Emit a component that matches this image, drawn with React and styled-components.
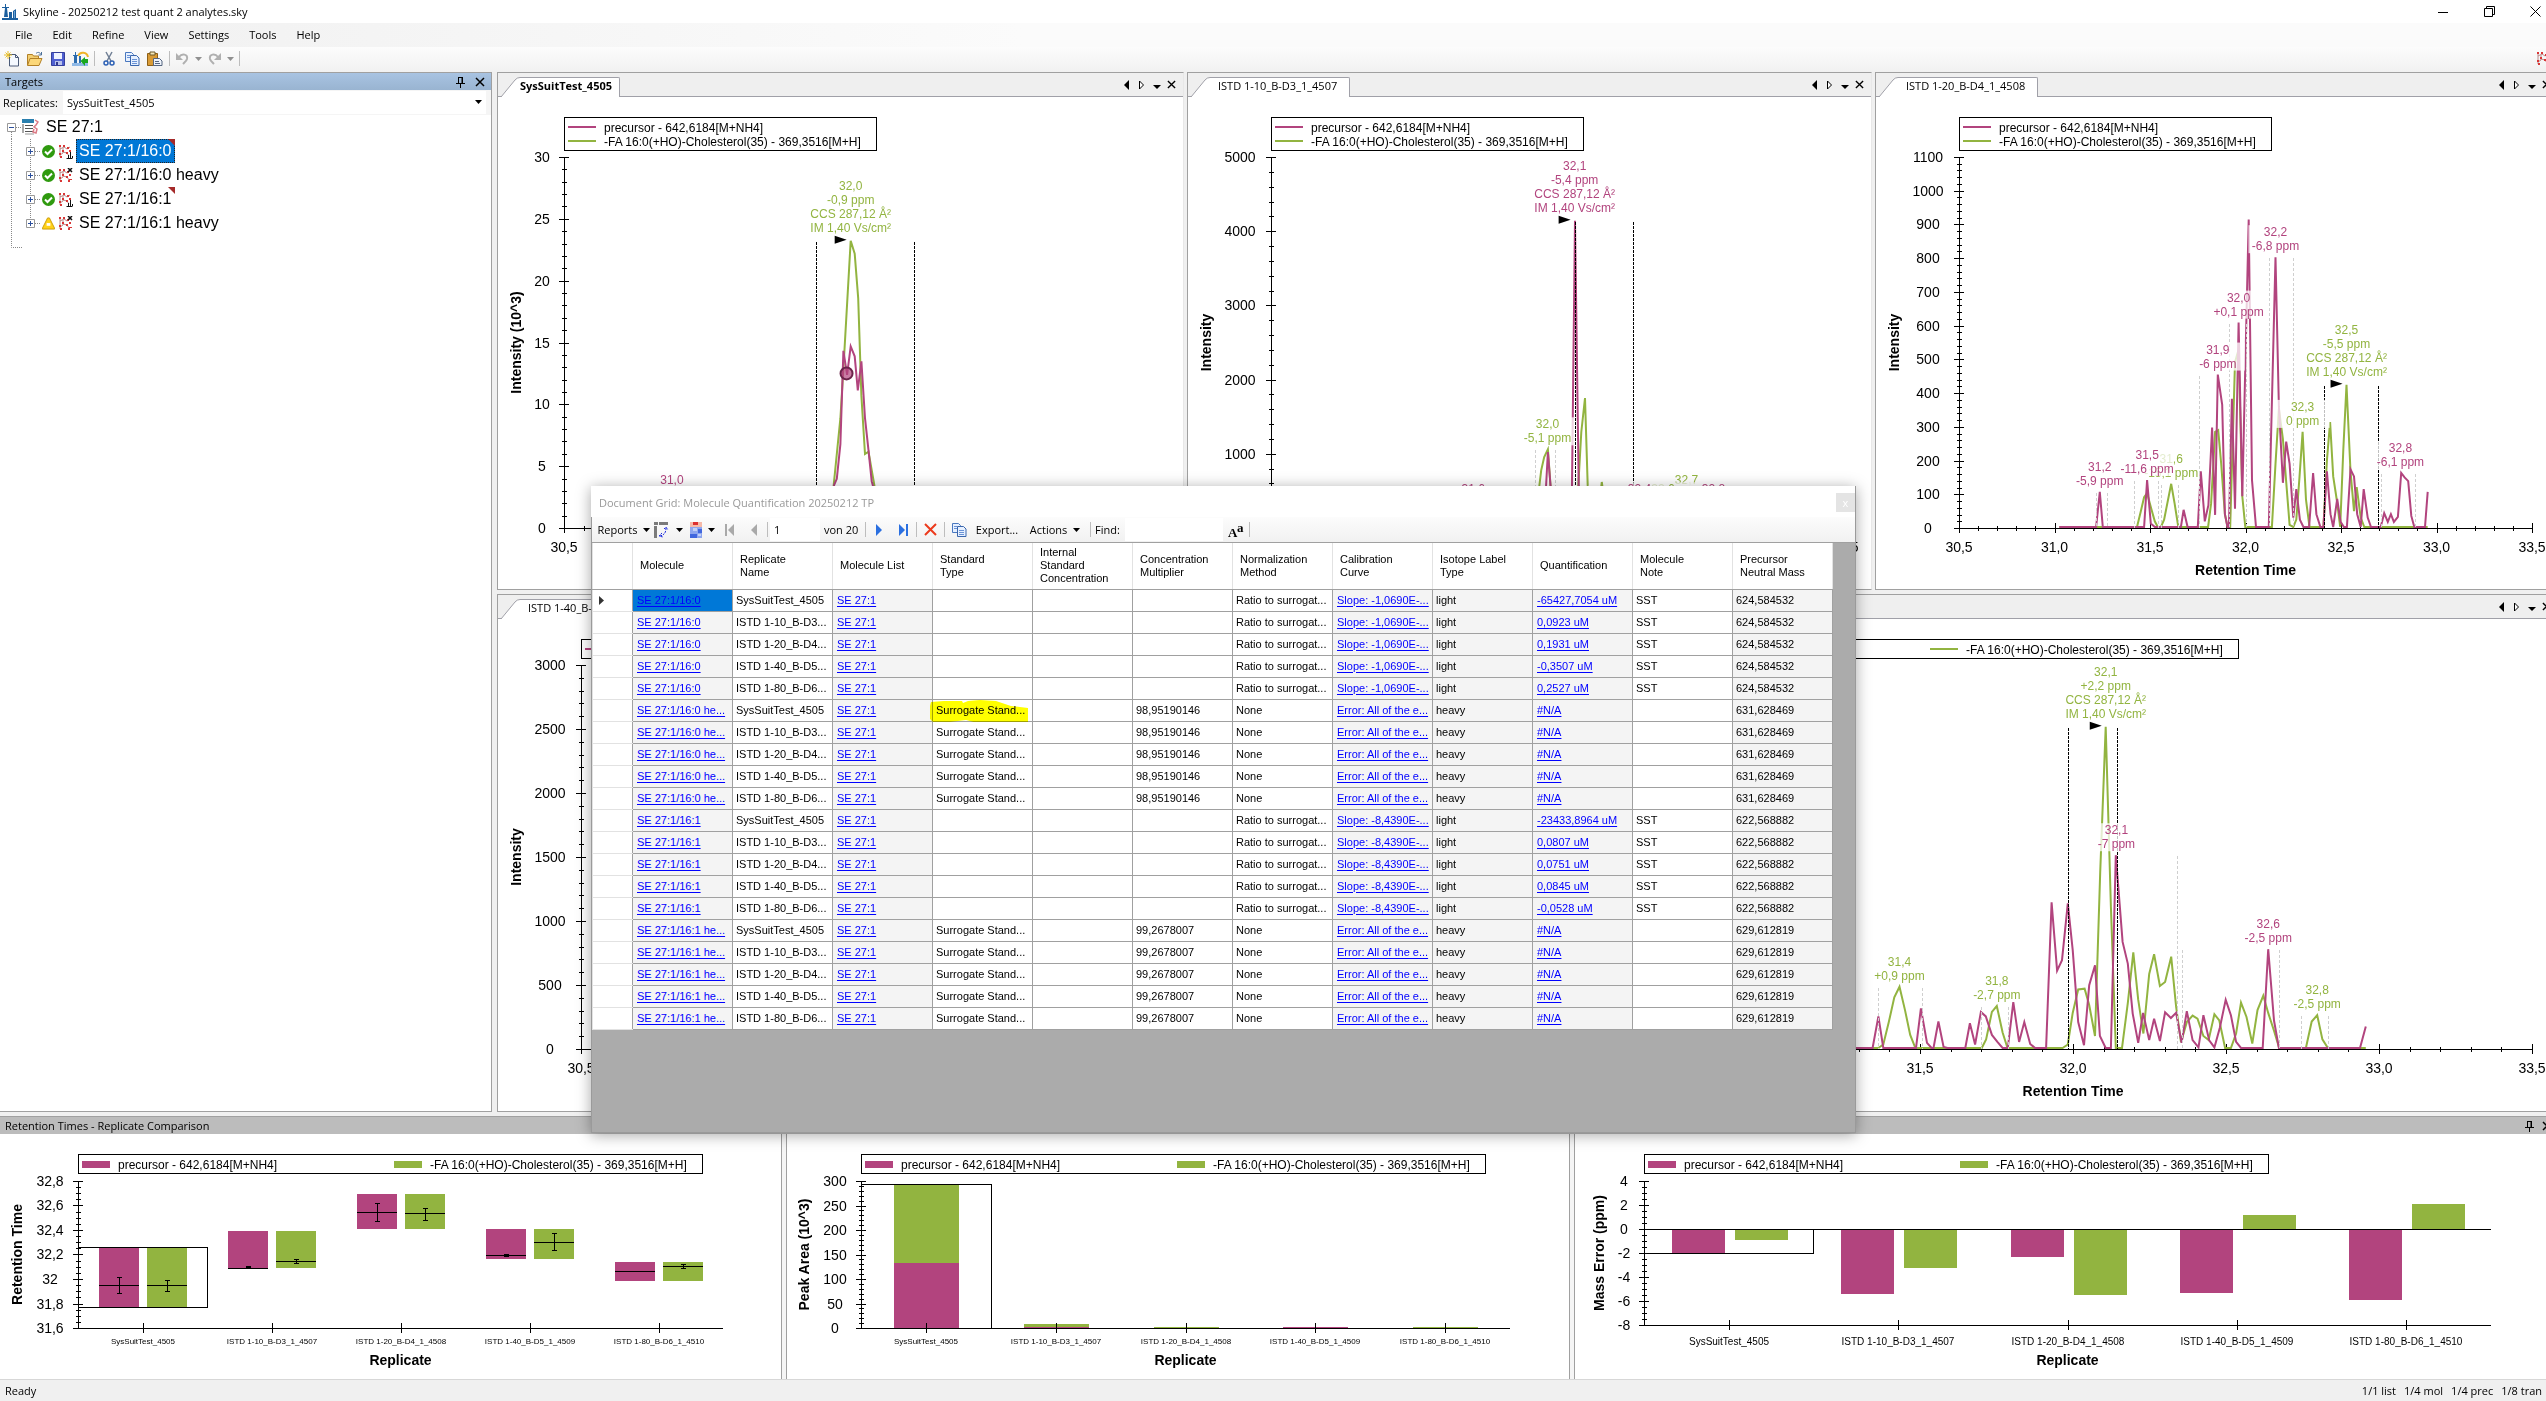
import React from "react";
import styled, { createGlobalStyle } from "styled-components";

const PURPLE = "#b2447e";
const GREEN = "#92b440";
const UI_FONT = `"Open Sans", "Noto Sans", sans-serif`;
const CHART_FONT = `"Liberation Sans", Arial, sans-serif`;

const GlobalStyle = createGlobalStyle`
*{box-sizing:border-box;}
html,body{
margin:0;
height:100%;
overflow:hidden;
background-color:#f0f0f0;
}
#root{height:100%;}
button,input,select{
font:inherit;
color:inherit;
}
svg{
display:block;
flex:none;
}
`

/* the main window is a little wider than the screen */
const Window=styled.div`
position:relative;
display:flex;
flex-direction:column;
width:calc(100% + 16px);
min-height:100%;
font-family:${UI_FONT};
font-size:11px;
line-height:16px;
color:#000;
background-color:#f0f0f0;
`
const TitleBar=styled.header`
display:flex;
align-items:center;
gap:5px;
height:23px;
padding-left:2px;
background-color:#fff;
`
const WindowTitle=styled.h1`
flex:1;
margin:0;
font-size:11px;
font-weight:400;
`
const PlainButton=styled.button`
display:flex;
align-items:center;
justify-content:center;
gap:6px;
padding:0;
border:0;
background:none;
`
const CaptionButton=styled(PlainButton)`
width:46px;
height:20px;
`
const CaptionButtons=styled.div`
display:flex;
padding-right:4px;
`
const MenuBar=styled.nav`
display:flex;
gap:20px;
height:24px;
padding-left:15px;
background:linear-gradient(to right,#f0f0f0,#fbfbfb 40%);
`
const ToolBar=styled.div`
display:flex;
align-items:center;
height:25px;
padding:0 7px 2px 0;
background:linear-gradient(#fcfcfc,#f1f1f1);
`
const ToolButton=styled(PlainButton)`
width:${(p) => p.$width || 23}px;
height:22px;
`
const Separator=styled.span`
width:1px;
height:15px;
margin:0 ${(p) => p.$gap || 2}px;
background-color:#bdbdbd;
`
const Spacer=styled.span`
flex:1;
`
const Workspace=styled.main`
display:flex;
flex:1;
gap:5px;
`
const TargetsPanel=styled.section`
display:flex;
flex-direction:column;
width:492px;
border:solid #a0a0a0;
border-width:1px 1px 1px 0;
background-color:#fff;
`
const TargetsHeader=styled.div`
display:flex;
align-items:center;
gap:10px;
height:17px;
padding:0 6px 0 5px;
background:linear-gradient(#a8c3e2,#99b4d1);
`
const PanelTitle=styled.h2`
flex:1;
margin:0;
font-size:11px;
font-weight:400;
`
const ReplicateRow=styled.label`
display:flex;
align-items:center;
height:25px;
padding-left:3px;
background-color:#f5f5f5;
`
const ReplicateBox=styled.span`
position:relative;
flex:1;
margin-left:5px;
margin-right:5px;
`
const ReplicateSelect=styled.select`
width:100%;
height:23px;
padding:0 4px;
border:0;
appearance:none;
background-color:#fff;
`
const SelectArrow=styled.span`
position:absolute;
right:4px;
top:9px;
pointer-events:none;
`
const Tree=styled.ul`
margin:0;
padding:0;
list-style:none;
font-family:${CHART_FONT};
font-size:16px;
`
const TreeRow=styled.li`
display:flex;
align-items:center;
height:24px;
`
const TreeLabel=styled.span`
position:relative;
margin-left:${(p) => (p.$root ? 4 : 3)}px;
padding:0 3px;
height:24px;
line-height:24px;
color:${(p) => (p.$selected ? "#fff" : "#000")};
background-color:${(p) => (p.$selected ? "#0078d7" : "transparent")};
outline:${(p) => (p.$selected ? "1px dotted #222" : "none")};
outline-offset:-1px;
`
const NoteFlag=styled.span`
position:absolute;
top:0;
right:0;
border-top:7px solid #a52a2a;
border-left:7px solid transparent;
`
const GraphArea=styled.div`
display:flex;
flex:1;
flex-direction:column;
gap:4px;
`
const GraphRow=styled.div`
display:grid;
flex:1;
grid-template-columns:${(p) => p.$columns};
`
const Pane=styled.section`
display:flex;
flex-direction:column;
min-width:0;
margin-right:3px;
border:1px solid #a0a0a0;
border-right-color:#e8e8e8;
background-color:#fff;
`
const TabStrip=styled.div`
display:flex;
align-items:flex-end;
height:24px;
padding-left:3px;
border-bottom:1px solid #a0a0a8;
background-color:#efefef;
`
const Tab=styled(PlainButton)`
height:20px;
margin-bottom:-1px;
padding:0 ${(p) => (p.$active ? 7 : 12)}px 3px ${(p) => (p.$active ? 0 : 8)}px;
border:solid #a0a0a8;
border-width:1px 1px 0 0;
border-top-right-radius:2px;
background-color:#fff;
font-weight:${(p) => (p.$active ? 700 : 400)};
`
const TabSlant=styled.svg`
margin-bottom:-1px;
`
const StripButtons=styled.div`
display:flex;
align-self:center;
margin-left:auto;
padding-right:4px;
`
const StripButton=styled(PlainButton)`
width:15px;
height:14px;
`
const Canvas=styled.svg`
width:100%;
overflow:hidden;
font-family:${CHART_FONT};
`
const BottomHeader=styled.div`
display:flex;
align-items:center;
gap:8px;
height:18px;
margin-top:4px;
padding:0 10px 0 5px;
border-top:1px solid #a0a0a0;
background-color:#bcbcbc;
`
const BottomRow=styled.div`
display:grid;
grid-template-columns:786fr 788fr 988fr;
height:245px;
background-color:#f5f5f5;
`
const BottomPane=styled.section`
min-width:0;
margin-right:4px;
border:solid #a0a0a0;
border-width:0 1px 0 ${(p) => (p.$first ? 0 : 1)}px;
background-color:#fff;
`
const StatusBar=styled.footer`
display:flex;
align-items:center;
gap:8px;
height:23px;
padding:0 20px 0 5px;
border-top:1px solid #d7d7d7;
border-bottom:1px solid #000;
background-color:#f0f0f0;
`

/* floating document grid */
const GridWindow=styled.section`
position:absolute;
left:591px;
top:486px;
width:1265px;
padding-bottom:102px;
border:solid #9a9a9a;
border-width:0 1px 1px 1px;
background-color:#ababab;
box-shadow:0 2px 14px rgba(0,0,0,.35);
`
const GridTitleBar=styled.header`
display:flex;
align-items:center;
height:31px;
margin-left:-1px;
padding:2px 0 0 8px;
background-color:#fff;
color:#999;
`
const GridTitle=styled.h2`
flex:1;
margin:0;
font-size:11px;
font-weight:400;
`
const GridClose=styled(PlainButton)`
width:19px;
height:19px;
background-color:#e4e4e4;
color:#fff;
`
const GridToolBar=styled.div`
display:flex;
align-items:center;
height:26px;
padding-left:5px;
border-bottom:1px solid #a0a0a0;
background:linear-gradient(#fcfcfc,#f1f1f1);
`
const PositionInput=styled.input`
width:50px;
height:23px;
padding:0 4px;
border:0;
background-color:#fff;
`
const FindInput=styled(PositionInput)`
width:98px;
margin-left:5px;
margin-right:4px;
`
const PositionCount=styled.span`
width:43px;
padding-left:4px;
`
const Grid=styled.table`
width:1240px;
table-layout:fixed;
border-collapse:collapse;
background-color:#fff;
font-family:${CHART_FONT};
font-size:11px;
line-height:13px;
`
const HeadCell=styled.th`
height:46px;
padding:0 0 0 7px;
border:solid #e2e2e2;
border-width:0 1px;
border-bottom:1px solid #a0a0a0;
font-weight:400;
text-align:left;
`
const RowHead=styled.th`
height:22px;
padding:0 0 0 6px;
border:1px solid #e2e2e2;
border-right-color:#a0a0a0;
`
const Cell=styled.td`
position:relative;
height:22px;
padding:0 0 0 ${(p) => (p.$link ? 4 : 3)}px;
border:1px solid #a0a0a0;
white-space:nowrap;
background-color:${(p) => (p.$selected ? "#0078d7" : p.$readOnly ? "#f4f4f4" : "#fff")};
`
const CellLink=styled.a`
color:#00f;
text-underline-offset:2px;
`
const Marker=styled.svg`
position:absolute;
left:-3px;
top:0;
mix-blend-mode:multiply;
`

// ---------- icons ----------

const DownArrow = ({ color = "#000" }) => (
    <svg width="7" height="4" viewBox="0 0 7 4"><path d="M0 0h7L3.5 4z" fill={color} /></svg>
)

const CloseIcon = ({ size = 10 }) => (
    <svg width={size} height={size} viewBox="0 0 10 10"><path d="M1 1l8 8M9 1l-8 8" stroke="#000" strokeWidth="1.5" /></svg>
)

const PinIcon = () => (
    <svg width="9" height="12" viewBox="0 0 9 12">
        <path d="M2.5 1v6M2 1.5h5M0 7.500h9M4.500 8v4" stroke="#000" fill="none" />
        <path d="M5.500 1h1.500v6H5.500z" />
    </svg>
)

const LogoIcon = () => (
    <svg width="16" height="16" viewBox="0 0 16 16">
        <path d="M0 14h16v2H0zM3 0h1v3h3v1H5l1 9H2L3 4H0V3h3z" fill="#1c5f9e" />
        <path d="M7 8h3v6H7zM11 7l3-2v9h-3z" fill="#1c5f9e" />
        <path d="M12.500 7v7" stroke="#6ba3d6" />
    </svg>
)

const NewIcon = () => (
    <svg width="16" height="16" viewBox="0 0 16 16">
        <path d="M5.500 3.500h6l3 3v8.500h-9z" fill="#f5f9ff" stroke="#4c5b78" />
        <path d="M11.500 3.500v3h3" fill="none" stroke="#4c5b78" />
        <path d="M4 0v8M0 4h8M1.500 1.500l5 5M6.500 1.500l-5 5" stroke="#e8bf2a" />
    </svg>
)

const OpenIcon = () => (
    <svg width="17" height="16" viewBox="0 0 17 16">
        <path d="M1.500 14V3.500h5l1 1.500h5v3" fill="#f3cf72" stroke="#b28026" />
        <path d="M1.500 14.500L4 7.500h12l-3 7z" fill="#fbd779" stroke="#b28026" />
        <path d="M10 2.500c2-2 4-1 5 1M15.500 1v3h-3" fill="none" stroke="#4a6f99" />
    </svg>
)

const SaveIcon = () => (
    <svg width="16" height="16" viewBox="0 0 16 16">
        <path d="M1.500 1.500h13v13h-13z" fill="#4f5fd0" stroke="#353f9c" />
        <path d="M4 2h8v6H4z" fill="#eef2ff" />
        <path d="M5 10h7v4H5z" fill="#b9c2ea" />
        <path d="M6 11h2v3H6z" fill="#30388c" />
    </svg>
)

const PanoramaIcon = () => (
    <svg width="17" height="16" viewBox="0 0 17 16">
        <path d="M6 5c2-5 9-4 10 1" fill="none" stroke="#f0b429" strokeWidth="2" />
        <path d="M0 12h16v3H0z" fill="#8fb9e6" />
        <path d="M3 1h1v3h2v1H5v7H2V5H1V4h2zM7 5h2v7H7z" fill="#2c6cae" />
        <path d="M16 8v4h-3v3L8.500 10 13 6v2z" fill="#19a81d" />
    </svg>
)

const CutIcon = () => (
    <svg width="12" height="16" viewBox="0 0 12 16" fill="none">
        <path d="M3 1l5 9M9 1L4 10" stroke="#707f95" strokeWidth="1.5" />
        <circle cx="3" cy="12" r="2" stroke="#2d61b5" strokeWidth="1.500" />
        <circle cx="9" cy="12" r="2" stroke="#2d61b5" strokeWidth="1.500" />
    </svg>
)

const CopyIcon = () => (
    <svg width="16" height="16" viewBox="0 0 16 16">
        <path d="M1.500 1.500h6l2 2v7h-8z" fill="#e6f0ff" stroke="#4a78bf" />
        <path d="M6.500 4.500h6l2.500 2.500v7.500H6.500z" fill="#e6f0ff" stroke="#3a66ad" />
        <path d="M3 4.500h3M3 6.500h3M8 8.500h5M8 10.500h5M8 12.500h5" stroke="#6a93d6" />
    </svg>
)

const PasteIcon = () => (
    <svg width="17" height="16" viewBox="0 0 17 16">
        <path d="M1.500 2.500h10v12h-10z" fill="#d99b35" stroke="#8d5f16" />
        <path d="M4 1h5v3H4z" fill="#f6e7b9" stroke="#6d5b2a" />
        <path d="M7.500 7.500h6l2.500 2.500v4.500H7.500z" fill="#eef3fb" stroke="#55657f" />
        <path d="M9 10.500h4M9 12.500h5" stroke="#55657f" />
    </svg>
)

const UndoIcon = ({ flip }) => (
    <svg width="13" height="13" viewBox="0 0 13 13">
        <g transform={flip ? "matrix(-1 0 0 1 13 0)" : undefined}>
            <path d="M3 5c3-4 9-3 8 2-.5 2-2 3-4 5" fill="none" stroke="#b0b0b0" strokeWidth="2" />
            <path d="M0 1v7h7z" fill="#b0b0b0" />
        </g>
    </svg>
)

// molecule skeleton, with chromatogram bars or a heavy mark in the corner
const MoleculeIcon = ({ kind }) => (
    <svg width="14" height="15" viewBox="0 0 14 15">
        <path d="M1 1v12M1 5l4-2 3 2 3-2M4 4v5l-3 2M4 8l4 1 2 3" fill="none" stroke="#b98a8a" />
        <path d="M0 1h2v2H0zM4 1h2v2H4zM8 3h2v2H8zM3 6h2v2H3zM7 8h2v2H7zM0 9h2v2H0zM1 12h2v2H1zM10 6h2v2h-2z" fill="#d93636" />
        {kind === "bars" && <path d="M7.500 14.500h6M9.500 14v-3M11.500 14V8M13.500 14v-2" stroke="#111" />}
        {kind === "heavy" && <path d="M9 0l4 4M13 0L9 4" stroke="#111" strokeWidth="1.500" />}
        {kind !== "bars" && <path d="M10 11h3v1h-3zM9 12h2v2H9z" fill="#d93636" />}
        {kind === "plain" && <path d="M11 3h2v2h-2zM12 9h2v2h-2z" fill="#d93636" />}
    </svg>
)

const ListIcon = () => (
    <svg width="17" height="16" viewBox="0 0 17 16">
        <path d="M0 0h12v4H0z" fill="#2a7fae" />
        <path d="M3 6.500h8M3 9.500h8M3 12.500h8M1 5v10" stroke="#555" strokeDasharray="9 1" />
        <path d="M3 15h9" stroke="#999" />
        <path d="M13 1l3 2-2 3-2 2 3 2-1 4-3-1 1-3" fill="none" stroke="#dc7b86" strokeWidth="1.500" />
    </svg>
)

const OkIcon = () => (
    <svg width="13" height="13" viewBox="0 0 13 13">
        <circle cx="6.500" cy="6.500" r="6.500" fill="#2f9a0f" />
        <path d="M3 6.500l2.500 2.500L10 4.500" fill="none" stroke="#fff" strokeWidth="2" />
    </svg>
)

const WarnIcon = () => (
    <svg width="13" height="13" viewBox="0 0 14 13">
        <path d="M6 .5h2l5.500 11v1H.5v-1z" fill="#ffd118" stroke="#c99a06" />
        <path d="M5 6h4v3H5z" fill="#fff" />
    </svg>
)

const PivotIcon = () => (
    <svg width="16" height="16" viewBox="0 0 16 16">
        <path d="M0 0h4v3H0zM5 0h9v3H5zM0 4h3v12H0z" fill="#7a7a7a" />
        <path d="M12 6c0 5-2 7-6 8M10 7l2-2 2 3M8 11l-3 3 4 1" fill="none" stroke="#1a2ae0" strokeDasharray="2 1" />
    </svg>
)

const HeatIcon = () => (
    <svg width="12" height="16" viewBox="0 0 12 16">
        <path d="M0 0h12v5H0z" fill="#f6b9a8" />
        <path d="M3 0h5v3H3z" fill="#dd2f2f" />
        <path d="M0 5h12v11H0z" fill="#8ea6ee" />
        <path d="M0 12h7v4H0zM8 7h4v4H8z" fill="#4167de" />
        <path d="M3 6h4v3H3zM8 12h3v2H8z" fill="#c3d1f7" />
    </svg>
)

const FirstIcon = ({ color, flip, bar }) => (
    <svg width="11" height="12" viewBox="0 0 11 12">
        <g transform={flip ? "matrix(-1 0 0 1 11 0)" : undefined} fill={color}>
            {bar && <path d="M0 0h2v12H0z" />}
            <path d="M9 0v12L3 6z" />
        </g>
    </svg>
)

const DeleteIcon = () => (
    <svg width="13" height="13" viewBox="0 0 13 13"><path d="M1 1l11 11M12 1L1 12" stroke="#ec3a1c" strokeWidth="2" /></svg>
)

const MatchCaseIcon = () => (
    <svg width="18" height="22" viewBox="0 0 18 22" fontFamily="Liberation Serif, serif" fontWeight="700">
        <text x="1" y="18" fontSize="13">A</text>
        <text x="10" y="13" fontSize="13">a</text>
    </svg>
)

// ---------- chromatograms ----------

const SERIES = ["precursor - 642,6184[M+NH4]", "-FA 16:0(+HO)-Cholesterol(35) - 369,3516[M+H]"];

const range = (from, to, step) => {
    const count = Math.round((to - from) / step);
    return Array.from({ length: count + 1 }, (_, i) => from + i * step);
}

// points are written as "time value" pairs
const parse = (text) => text.trim().split(/\s*,\s*/).map((pair) => pair.split(" ").map(Number));

function Legend({ x, y, swatch, columns = 2 }) {
    const stacked = columns === 1;
    return (
        <g fontSize="12">
            <rect x={x} y={y} width={stacked ? 312 : 624} height={stacked ? 33 : 19} fill="#fff" stroke="#000" shapeRendering="crispEdges" />
            {SERIES.map((name, i) => {
                const left = x + 4 + (stacked ? 0 : i * 312);
                const top = y + 10 + (stacked ? i * 14 : 0);
                return (
                    <g key={name}>
                        <rect x={left} y={swatch ? top - 3 : top - 1} width="28" height={swatch ? 7 : 2} fill={i ? GREEN : PURPLE} />
                        <text x={left + 36} y={top + 1} dominantBaseline="central">{name}</text>
                    </g>
                )
            })}
        </g>
    )
}

function YAxis({ x, top, bottom, min, max, major, minor, labelX, format = String }) {
    const py = (v) => Math.round(bottom - ((v - min) / (max - min)) * (bottom - top));
    return (
        <g>
            <path
                d={`M${x} ${top}V${bottom}` + range(min, max, minor).map((v) => `M${x - 2} ${py(v)}h5`).join("") + range(min, max, major).map((v) => `M${x - 5} ${py(v)}h10`).join("")}
                stroke="#000"
                shapeRendering="crispEdges"
            />
            {range(min, max, major).map((v) => (
                <text key={v} x={x - labelX} y={py(v)} fontSize="14" textAnchor="middle" dominantBaseline="central">{format(v)}</text>
            ))}
        </g>
    )
}

const VerticalTitle = ({ x, y, children }) => (
    <text transform={`translate(${x} ${y}) rotate(-90)`} fontSize="14" fontWeight="700" textAnchor="middle" dominantBaseline="central">{children}</text>
)

function Chromatogram({ left, right, top, bottom, max, major, minor, labelX, yTitle = "Intensity", columns, purple, green, bounds = [], labels = [], cursor }) {
    const px = (t) => left + ((t - 30.5) / 3) * (right - left);
    const py = (v) => bottom - (v / max) * (bottom - top);
    const line = (text) => parse(text).map(([t, v]) => `${px(t).toFixed(1)},${(py(v) - 1).toFixed(1)}`).join(" ");

    return (
        <Canvas height="492" role="img" aria-label="Chromatogram">
            <Legend x={left} y={20} columns={columns} />
            <YAxis x={left} top={top} bottom={bottom} min={0} max={max} major={major} minor={minor} labelX={labelX} />
            <path
                d={`M${left - 5} ${bottom}H${right}` + range(30.5, 33.5, 0.1).map((t) => `M${Math.round(px(t))} ${bottom - 2}v5`).join("") + range(30.5, 33.5, 0.5).map((t) => `M${Math.round(px(t))} ${bottom - 5}v10`).join("")}
                stroke="#000"
                shapeRendering="crispEdges"
            />
            {range(30.5, 33.5, 0.5).map((t) => (
                <text key={t} x={px(t)} y={bottom + 19} fontSize="14" textAnchor="middle" dominantBaseline="central">{t.toFixed(1).replace(".", ",")}</text>
            ))}
            <text x={(left + right) / 2} y={bottom + 42} fontSize="14" fontWeight="700" textAnchor="middle" dominantBaseline="central">Retention Time</text>
            <VerticalTitle x={18} y={(top + bottom) / 2}>{yTitle}</VerticalTitle>

            {green.map((g) => <polyline key={g} points={line(g)} fill="none" stroke={GREEN} strokeWidth="2" />)}
            {purple.map((p) => <polyline key={p} points={line(p)} fill="none" stroke={PURPLE} strokeWidth="2" />)}
            {cursor && <circle cx={px(cursor[0])} cy={py(cursor[1])} r="6" fill={PURPLE} fillOpacity=".7" stroke="#6b234a" strokeWidth="2" />}
            {bounds.map(([t, v, best]) => (
                <path key={`${t}-${v}`} d={`M${Math.round(px(t))} ${Math.round(py(v))}V${bottom}`} stroke={best ? "#000" : "#cfcfcf"} strokeDasharray={best ? "3 1" : "3 2"} shapeRendering="crispEdges" />
            ))}
            {labels.map(({ t, v, lines, color, best }) => {
                const last = py(v) - (best ? 14 : 12);
                const height = lines.length * 14;
                return (
                    <g key={`${t}-${v}`} fontSize="12" fill={color || PURPLE} textAnchor="middle">
                        <rect x={px(t) - 27} y={last - height + 7} width="54" height={height} fill="#fff" fillOpacity=".75" />
                        {lines.map((text, i) => (
                            <text key={text} x={px(t)} y={last - (lines.length - 1 - i) * 14} dominantBaseline="central">{text}</text>
                        ))}
                        {best && <path d={`M${px(t) - 16} ${py(v) - 6}v8l12-4z`} fill="#000" />}
                    </g>
                )
            })}
        </Canvas>
    )
}

const CHROM_1 = {
    left: 66, right: 660, top: 60, bottom: 431, max: 30, major: 5, minor: 1, labelX: 22,
    yTitle: "Intensity (10^3)",
    columns: 1,
    green: ["31.84 0,31.862 3.4,31.896 8.8,31.911 12.8,31.948 23.15,31.968 22.1,31.986 18.5,32.002 10.6,32.02 5.9,32.038 6.1,32.067 3.4,32.09 0"],
    purple: ["31.85 0,31.864 3.4,31.878 3.9,31.896 6.7,31.911 14.25,31.93 12.3,31.948 14.6,31.968 13.8,31.984 11.05,32.002 13.4,32.02 8.8,32.038 6.2,32.054 3.7,32.066 3,32.08 0"],
    cursor: [31.927, 12.5],
    bounds: [[31.774, 23.15, true], [32.27, 23.15, true]],
    labels: [
        { t: 31.948, v: 23.15, color: GREEN, best: true, lines: ["32,0", "-0,9 ppm", "CCS 287,12 Å²", "IM 1,40 Vs/cm²"] },
        { t: 31.045, v: 2.9, lines: ["31,0"] },
    ],
}

const CHROM_2 = {
    left: 83, right: 657, top: 60, bottom: 431, max: 5000, major: 1000, minor: 200, labelX: 31,
    columns: 1,
    green: [
        "31.89 0,31.903 560,31.912 764,31.928 943,31.947 1047,31.961 560,31.975 0",
        "32.09 0,32.106 560,32.122 1280,32.141 1738,32.155 560,32.17 0",
        "32.2 0,32.229 606,32.26 0",
    ],
    purple: ["31.925 0,31.938 560,31.947 1010,31.961 560,31.975 0,32.06 0,32.073 560,32.089 4128,32.108 560,32.12 0"],
    bounds: [[31.879, 1047], [31.984, 1047], [32.089, 4128, true], [32.393, 4128, true]],
    labels: [
        { t: 31.945, v: 1047, color: GREEN, lines: ["32,0", "-5,1 ppm"] },
        { t: 32.087, v: 4128, best: true, lines: ["32,1", "-5,4 ppm", "CCS 287,12 Å²", "IM 1,40 Vs/cm²"] },
        { t: 32.671, v: 490, color: GREEN, lines: ["32,7"] },
        { t: 31.557, v: 360, lines: ["31,6"] },
        { t: 32.549, v: 360, color: GREEN, lines: ["32,6"] },
        { t: 32.426, v: 360, lines: ["32,4"] },
        { t: 32.813, v: 360, lines: ["32,8"] },
    ],
}

const CHROM_3 = {
    left: 83, right: 656, top: 60, bottom: 431, max: 1100, major: 100, minor: 20, labelX: 31,
    columns: 1,
    green: ["31.025 0,31.432 0,31.453 49,31.469 88,31.485 100,31.504 59,31.525 17,31.541 0,31.557 0,31.574 22,31.611 128,31.629 70,31.648 0,31.804 0,31.82 70,31.841 282,31.857 287,31.873 187,31.892 38,31.906 0,31.92 0,31.945 489,31.964 526,31.983 91,31.999 0,32.138 0,32.157 187,32.175 351,32.196 261,32.213 134,32.231 6,32.25 0,32.266 22,32.282 144,32.299 282,32.317 81,32.335 0,32.408 0,32.426 197,32.443 311,32.459 150,32.478 80,32.496 0,32.512 229,32.529 422,32.55 165,32.568 47,32.582 118,32.603 28,32.622 0,32.954 0"],
    purple: ["31.025 0,31.218 0,31.237 104,31.253 0,31.469 0,31.485 139,31.504 10,31.525 0,31.662 0,31.676 51,31.697 0,31.75 0,31.766 165,31.787 17,31.806 65,31.825 295,31.841 36,31.855 452,31.878 362,31.892 38,31.906 0,31.913 0,31.929 380,31.945 54,31.964 606,31.983 91,32.017 912,32.034 139,32.055 0,32.122 0,32.157 800,32.175 356,32.196 131,32.213 253,32.231 187,32.25 28,32.266 112,32.285 22,32.303 0,32.333 0,32.354 160,32.371 38,32.392 0,32.408 0,32.426 165,32.445 38,32.459 0,32.48 83,32.498 15,32.515 0,32.531 0,32.55 171,32.568 150,32.585 38,32.603 0,32.619 112,32.64 28,32.657 0,32.708 0,32.726 41,32.745 15,32.761 38,32.777 15,32.798 30,32.815 160,32.833 147,32.852 136,32.868 33,32.884 0,32.94 0,32.954 104"],
    bounds: [[31.218, 104], [31.274, 104], [31.416, 139], [31.541, 139], [31.557, 128], [31.646, 128], [31.755, 452], [31.913, 606], [32.001, 606], [32.124, 800], [32.247, 800], [32.708, 160], [32.887, 160], [32.41, 422, true], [32.694, 422, true]],
    labels: [
        { t: 31.237, v: 104, lines: ["31,2", "-5,9 ppm"] },
        { t: 31.611, v: 128, color: GREEN, lines: ["31,6", "-15,1 ppm"] },
        { t: 31.485, v: 139, lines: ["31,5", "-11,6 ppm"] },
        { t: 31.855, v: 452, lines: ["31,9", "-6 ppm"] },
        { t: 31.964, v: 606, lines: ["32,0", "+0,1 ppm"] },
        { t: 32.157, v: 800, lines: ["32,2", "-6,8 ppm"] },
        { t: 32.299, v: 282, color: GREEN, lines: ["32,3", "0 ppm"] },
        { t: 32.529, v: 422, color: GREEN, best: true, lines: ["32,5", "-5,5 ppm", "CCS 287,12 Å²", "IM 1,40 Vs/cm²"] },
        { t: 32.811, v: 160, lines: ["32,8", "-6,1 ppm"] },
    ],
}

const CHROM_4 = {
    left: 83, right: 1001, top: 46, bottom: 430, max: 3000, major: 500, minor: 100, labelX: 31,
    green: [],
    purple: [],
}

const CHROM_5 = {
    ...CHROM_4,
    green: ["31.025 0,31.364 0,31.38 27,31.398 202,31.416 395,31.433 479,31.451 296,31.468 102,31.485 0,31.702 0,31.716 67,31.735 282,31.751 328,31.77 121,31.786 0,31.966 0,31.983 27,31.999 274,32.017 457,32.038 463,32.053 336,32.072 94,32.089 1372,32.107 2510,32.124 1103,32.14 0,32.16 0,32.179 350,32.197 748,32.213 377,32.23 113,32.249 578,32.265 732,32.284 484,32.301 516,32.321 713,32.337 323,32.353 46,32.372 202,32.391 253,32.407 229,32.426 94,32.443 62,32.462 264,32.478 215,32.497 0,32.516 0,32.533 113,32.549 355,32.567 242,32.586 35,32.603 296,32.622 409,32.638 274,32.657 134,32.674 0,32.761 0,32.78 207,32.798 256,32.815 67,32.833 0,32.957 0"],
    purple: ["31.025 0,31.345 0,31.364 247,31.38 0,31.487 0,31.503 309,31.523 40,31.538 0,31.544 0,31.56 207,31.577 8,31.59 0,31.648 0,31.663 194,31.68 27,31.699 282,31.715 247,31.735 102,31.753 48,31.77 0,31.787 0,31.805 358,31.824 48,31.841 202,31.86 32,31.876 0,31.912 0,31.93 1138,31.948 605,31.964 686,31.983 1130,31.999 767,32.017 202,32.036 22,32.053 490,32.072 646,32.088 94,32.107 0,32.124 0,32.14 1506,32.162 829,32.179 659,32.195 269,32.213 40,32.229 274,32.249 62,32.265 229,32.284 54,32.301 280,32.32 234,32.337 274,32.355 40,32.372 288,32.391 62,32.41 5,32.426 256,32.445 59,32.462 5,32.48 161,32.499 377,32.516 256,32.533 48,32.549 0,32.62 0,32.638 772,32.657 215,32.673 0,32.938 0,32.957 167"],
    bounds: [[31.364, 479], [31.506, 479], [31.699, 328], [31.787, 328], [32.34, 1506], [32.356, 772], [32.673, 772], [32.745, 256], [32.834, 256], [31.983, 2510, true], [32.144, 2510, true]],
    labels: [
        { t: 31.433, v: 479, color: GREEN, lines: ["31,4", "+0,9 ppm"] },
        { t: 31.751, v: 328, color: GREEN, lines: ["31,8", "-2,7 ppm"] },
        { t: 32.107, v: 2510, color: GREEN, best: true, lines: ["32,1", "+2,2 ppm", "CCS 287,12 Å²", "IM 1,40 Vs/cm²"] },
        { t: 32.142, v: 1506, lines: ["32,1", "-7 ppm"] },
        { t: 32.638, v: 772, lines: ["32,6", "-2,5 ppm"] },
        { t: 32.798, v: 256, color: GREEN, lines: ["32,8", "-2,5 ppm"] },
    ],
}

// ---------- replicate comparison ----------

const REPLICATES = ["SysSuitTest_4505", "ISTD 1-10_B-D3_1_4507", "ISTD 1-20_B-D4_1_4508", "ISTD 1-40_B-D5_1_4509", "ISTD 1-80_B-D6_1_4510"];

// [start, end, apex, error high, error low] for the two transitions
const TIMES = [
    [[32.264, 31.771, 31.949, 32.014, 31.884], [32.264, 31.771, 31.949, 31.995, 31.906]],
    [[32.391, 32.088, 32.088, 32.109, 32.095], [32.391, 32.093, 32.144, 32.161, 32.128]],
    [[32.692, 32.407, 32.551, 32.624, 32.47], [32.692, 32.407, 32.535, 32.583, 32.478]],
    [[32.407, 32.163, 32.193, 32.207, 32.185], [32.407, 32.163, 32.299, 32.372, 32.234]],
    [[32.139, 31.985, 32.063, 32.063, 32.063], [32.139, 31.985, 32.104, 32.12, 32.088]],
]
const AREAS = [[133, 161], [3, 6], [0, 3], [3, 0], [0, 3]];
const ERRORS = [[-2.03, -0.94], [-5.4, -3.25], [-2.35, -5.5], [-5.3, 1.13], [-5.9, 2.12]];

function ReplicateChart({ name, left, right, bottom, min, max, major, minor, labelX, titleX, yTitle, format, labelSize, baseline, selection, children }) {
    const top = 47;
    const slot = (right - left) / REPLICATES.length;
    const py = (v) => Math.round(bottom - ((v - min) / (max - min)) * (bottom - top));
    const center = (i) => Math.round(left + slot * (i + 0.5));
    return (
        <Canvas height="245" role="img" aria-label={name}>
            <Legend x={left} y={20} swatch />
            {children(center, py)}
            <rect x={left} y={py(selection[0])} width={Math.round(slot)} height={py(selection[1]) - py(selection[0])} fill="none" stroke="#000" shapeRendering="crispEdges" />
            <YAxis x={left} top={top} bottom={bottom} min={min} max={max} major={major} minor={minor} labelX={labelX} format={format} />
            <path
                d={`M${left} ${bottom}H${right}` + (baseline ? `M${left} ${py(0)}H${right}` : "") + REPLICATES.map((_, i) => `M${center(i)} ${bottom - 5}v10`).join("")}
                stroke="#000"
                shapeRendering="crispEdges"
            />
            {REPLICATES.map((replicate, i) => (
                <text key={replicate} x={center(i)} y="207" fontSize={labelSize} textAnchor="middle" dominantBaseline="central">{replicate}</text>
            ))}
            <text x={(left + right) / 2} y="226" fontSize="14" fontWeight="700" textAnchor="middle" dominantBaseline="central">Replicate</text>
            <VerticalTitle x={titleX} y={(top + bottom) / 2}>{yTitle}</VerticalTitle>
        </Canvas>
    )
}

const formatTime = (v) => String(Math.round(v * 10) / 10).replace(".", ",");

function TimesChart() {
    return (
        <ReplicateChart name="Retention Time" yTitle="Retention Time" left={78} right={723} bottom={194} min={31.6} max={32.8} major={0.2} minor={0.05} labelX={28} titleX={17} format={formatTime} labelSize={8} selection={[32.264, 31.771]}>
            {(center, py) => TIMES.map((pair, i) => pair.map(([start, end, apex, high, low], s) => {
                const x = center(i) + (s ? 4 : -44);
                return (
                    <g key={`${i}-${s}`} shapeRendering="crispEdges">
                        <rect x={x} y={py(start)} width="40" height={py(end) - py(start)} fill={s ? GREEN : PURPLE} />
                        <path d={`M${x} ${py(apex)}h40M${x + 20} ${py(high)}V${py(low)}M${x + 18} ${py(high)}h5M${x + 18} ${py(low)}h5`} stroke="#000" />
                    </g>
                )
            }))}
        </ReplicateChart>
    )
}

function AreaChart() {
    return (
        <ReplicateChart name="Peak Area" yTitle="Peak Area (10^3)" left={74} right={723} bottom={194} min={0} max={300} major={50} minor={10} labelX={26} titleX={17} labelSize={8} selection={[294, 0]}>
            {(center, py) => AREAS.map(([purple, green], i) => (
                <g key={i} shapeRendering="crispEdges">
                    <rect x={center(i) - 32} y={py(purple)} width="65" height={py(0) - py(purple)} fill={PURPLE} />
                    <rect x={center(i) - 32} y={py(purple + green)} width="65" height={py(purple) - py(purple + green)} fill={GREEN} />
                </g>
            ))}
        </ReplicateChart>
    )
}

function ErrorChart() {
    return (
        <ReplicateChart name="Mass Error" yTitle="Mass Error (ppm)" left={69} right={916} bottom={191} min={-8} max={4} major={2} minor={0.5} labelX={20} titleX={24} labelSize={10} baseline selection={[0, -2]}>
            {(center, py) => ERRORS.map((pair, i) => pair.map((v, s) => (
                <rect key={`${i}-${s}`} x={center(i) + (s ? 6 : -57)} y={py(Math.max(v, 0))} width="53" height={Math.abs(py(v) - py(0))} fill={s ? GREEN : PURPLE} shapeRendering="crispEdges" />
            )))}
        </ReplicateChart>
    )
}

// ---------- document grid ----------

const COLUMNS = [
    ["Molecule"], ["Replicate", "Name"], ["Molecule List"], ["Standard", "Type"], ["Internal", "Standard", "Concentration"], ["Concentration", "Multiplier"],
    ["Normalization", "Method"], ["Calibration", "Curve"], ["Isotope Label", "Type"], ["Quantification"], ["Molecule", "Note"], ["Precursor", "Neutral Mass"],
]
const READ_ONLY = [0, 2, 7, 8, 9, 11];
const LINKS = [0, 2, 7, 9];
const SHORT_NAMES = ["SysSuitTest_4505", "ISTD 1-10_B-D3...", "ISTD 1-20_B-D4...", "ISTD 1-40_B-D5...", "ISTD 1-80_B-D6..."];

const GROUPS = [
    { molecule: "SE 27:1/16:0", curve: "Slope: -1,0690E-...", mass: "624,584532", values: ["-65427,7054 uM", "0,0923 uM", "0,1931 uM", "-0,3507 uM", "0,2527 uM"] },
    { molecule: "SE 27:1/16:0 he...", multiplier: "98,95190146", mass: "631,628469" },
    { molecule: "SE 27:1/16:1", curve: "Slope: -8,4390E-...", mass: "622,568882", values: ["-23433,8964 uM", "0,0807 uM", "0,0751 uM", "0,0845 uM", "-0,0528 uM"] },
    { molecule: "SE 27:1/16:1 he...", multiplier: "99,2678007", mass: "629,612819" },
]

const ROWS = GROUPS.flatMap((g) => SHORT_NAMES.map((name, i) => (
    g.values
        ? [g.molecule, name, "SE 27:1", "", "", "", "Ratio to surrogat...", g.curve, "light", g.values[i], "SST", g.mass]
        : [g.molecule, name, "SE 27:1", "Surrogate Stand...", "", g.multiplier, "None", "Error: All of the e...", "heavy", "#N/A", "", g.mass]
)))

function DocumentGrid() {
    return (
        <GridWindow>
            <GridTitleBar>
                <GridTitle>Document Grid: Molecule Quantification 20250212 TP</GridTitle>
                <GridClose aria-label="Close">x</GridClose>
            </GridTitleBar>
            <GridToolBar>
                <ToolButton $width={54}>Reports <DownArrow /></ToolButton>
                <ToolButton $width={34} aria-label="Pivot"><PivotIcon /><DownArrow /></ToolButton>
                <ToolButton $width={34} aria-label="Heat map"><HeatIcon /><DownArrow /></ToolButton>
                <ToolButton aria-label="First"><FirstIcon color="#a9a9a9" bar /></ToolButton>
                <ToolButton aria-label="Previous"><FirstIcon color="#a9a9a9" /></ToolButton>
                <Separator />
                <PositionInput aria-label="Position" defaultValue="1" />
                <PositionCount>von 20</PositionCount>
                <Separator />
                <ToolButton aria-label="Next"><FirstIcon color="#2a6fe0" flip /></ToolButton>
                <ToolButton aria-label="Last"><FirstIcon color="#2a6fe0" flip bar /></ToolButton>
                <Separator />
                <ToolButton aria-label="Delete"><DeleteIcon /></ToolButton>
                <Separator />
                <ToolButton aria-label="Copy"><CopyIcon /></ToolButton>
                <ToolButton $width={54}>Export...</ToolButton>
                <ToolButton $width={62}>Actions <DownArrow /></ToolButton>
                <Separator $gap={4} />
                <label htmlFor="find">Find:</label>
                <FindInput id="find" />
                <ToolButton $width={18} aria-label="Match case"><MatchCaseIcon /></ToolButton>
                <Separator $gap={4} />
            </GridToolBar>
            <Grid>
                <colgroup>
                    <col width="40" />
                    {COLUMNS.map((_, i) => <col key={i} width="100" />)}
                </colgroup>
                <thead>
                    <tr>
                        <HeadCell />
                        {COLUMNS.map((words, i) => (
                            <HeadCell key={i} scope="col">
                                {words.map((word, j) => <React.Fragment key={word}>{j > 0 && <br />}{word}</React.Fragment>)}
                            </HeadCell>
                        ))}
                    </tr>
                </thead>
                <tbody>
                    {ROWS.map((row, r) => (
                        <tr key={r}>
                            <RowHead>{r === 0 && <svg width="5" height="9" viewBox="0 0 5 9"><path d="M0 0v9l5-4.500z" fill="#333" /></svg>}</RowHead>
                            {row.map((value, c) => (
                                <Cell key={c} $link={LINKS.includes(c)} $readOnly={READ_ONLY.includes(c)} $selected={r === 0 && c === 0}>
                                    {LINKS.includes(c) ? <CellLink href="#">{value}</CellLink> : value}
                                    {r === 5 && c === 3 && (
                                        <Marker width="99" height="28" viewBox="0 0 99 28">
                                            <path d="M1 2L14 1h18l1 2 5-2 12-1 16 1 15 5 17 2v16l-12 1-2 2H66l-8-2-7-1-15-4-16 2H3L0 19V6z" fill="#ff0" />
                                        </Marker>
                                    )}
                                </Cell>
                            ))}
                        </tr>
                    ))}
                </tbody>
            </Grid>
        </GridWindow>
    )
}

// ---------- window parts ----------

const TARGETS = [
    { name: "SE 27:1/16:0", kind: "bars", ok: true, selected: true, note: true },
    { name: "SE 27:1/16:0 heavy", kind: "heavy", ok: true },
    { name: "SE 27:1/16:1", kind: "bars", ok: true, note: true },
    { name: "SE 27:1/16:1 heavy", kind: "heavy" },
]

const ChildGuide = ({ last }) => (
    <svg width="42" height="24" viewBox="0 0 42 24">
        <path d={`M11.500 0v24M30.500 0v${last ? 12 : 24}M35 12.500h6`} stroke="#888" strokeDasharray="1 1" />
        <path d="M26.500 8.500h8v8h-8z" fill="#fff" stroke="#999" />
        <path d="M28 12.500h5M30.500 10v5" stroke="#2b4f9c" />
    </svg>
)

function Targets() {
    return (
        <TargetsPanel>
            <TargetsHeader><PanelTitle>Targets</PanelTitle><PinIcon /><CloseIcon /></TargetsHeader>
            <ReplicateRow>
                Replicates:
                <ReplicateBox>
                    <ReplicateSelect defaultValue={REPLICATES[0]}>
                        {REPLICATES.map((name) => <option key={name}>{name}</option>)}
                    </ReplicateSelect>
                    <SelectArrow><DownArrow /></SelectArrow>
                </ReplicateBox>
            </ReplicateRow>
            <Tree>
                <TreeRow>
                    <svg width="22" height="24" viewBox="0 0 22 24">
                        <path d="M11.500 17v7M16 12.500h6" stroke="#888" strokeDasharray="1 1" />
                        <path d="M7.500 8.500h8v8h-8z" fill="#fff" stroke="#999" />
                        <path d="M9 12.500h5" stroke="#2b4f9c" />
                    </svg>
                    <ListIcon />
                    <TreeLabel $root>SE 27:1</TreeLabel>
                </TreeRow>
                {TARGETS.map((target, i) => (
                    <TreeRow key={target.name}>
                        <ChildGuide last={i === TARGETS.length - 1} />
                        {target.ok ? <OkIcon /> : <WarnIcon />}
                        <svg width="4" height="1" />
                        <MoleculeIcon kind={target.kind} />
                        <TreeLabel $selected={target.selected}>{target.name}{target.note && <NoteFlag />}</TreeLabel>
                    </TreeRow>
                ))}
                <TreeRow>
                    <svg width="24" height="24" viewBox="0 0 24 24"><path d="M11.500 0v12.500H22" fill="none" stroke="#888" strokeDasharray="1 1" /></svg>
                </TreeRow>
            </Tree>
        </TargetsPanel>
    )
}

function GraphPane({ title, active, chart }) {
    return (
        <Pane>
            <TabStrip>
                <TabSlant width="19" height="20" viewBox="0 0 19 20">
                    <path d="M0 20L14 3q2-2.500 5-2.500V20z" fill="#fff" />
                    <path d="M0 20L14 3q2-2.500 5-2.500" fill="none" stroke="#a0a0a8" />
                </TabSlant>
                <Tab $active={active}>{title}</Tab>
                <StripButtons>
                    <StripButton aria-label="Scroll left"><svg width="5" height="10" viewBox="0 0 5 10"><path d="M5 0v10L0 5z" /></svg></StripButton>
                    <StripButton aria-label="Scroll right"><svg width="6" height="10" viewBox="0 0 6 10"><path d="M.5 1v8l4-4z" fill="#fff" stroke="#000" /></svg></StripButton>
                    <StripButton aria-label="Window list"><svg width="8" height="8" viewBox="0 0 8 8"><path d="M0 4h8L4 8z" /></svg></StripButton>
                    <StripButton aria-label="Close"><CloseIcon size={9} /></StripButton>
                </StripButtons>
            </TabStrip>
            <Chromatogram {...chart} />
        </Pane>
    )
}

function App() {
    return (
        <>
            <GlobalStyle />
            <Window>
                <TitleBar>
                    <LogoIcon />
                    <WindowTitle>Skyline - 20250212 test quant 2 analytes.sky</WindowTitle>
                    <CaptionButtons>
                        <CaptionButton aria-label="Minimize"><svg width="10" height="10" viewBox="0 0 10 10"><path d="M0 5.500h10" stroke="#000" /></svg></CaptionButton>
                        <CaptionButton aria-label="Restore">
                            <svg width="11" height="11" viewBox="0 0 11 11"><path d="M.5 2.500h8v8h-8zM2.500 2.500v-2h8v8h-2" fill="none" stroke="#000" /></svg>
                        </CaptionButton>
                        <CaptionButton aria-label="Close"><svg width="11" height="11" viewBox="0 0 11 11"><path d="M.5.5l10 10M10.500.5l-10 10" stroke="#000" /></svg></CaptionButton>
                    </CaptionButtons>
                </TitleBar>
                <MenuBar>
                    {["File", "Edit", "Refine", "View", "Settings", "Tools", "Help"].map((item) => <PlainButton key={item}>{item}</PlainButton>)}
                </MenuBar>
                <ToolBar>
                    <ToolButton aria-label="New"><NewIcon /></ToolButton>
                    <ToolButton aria-label="Open"><OpenIcon /></ToolButton>
                    <ToolButton aria-label="Save"><SaveIcon /></ToolButton>
                    <ToolButton aria-label="Upload"><PanoramaIcon /></ToolButton>
                    <Separator $gap={2} />
                    <ToolButton aria-label="Cut"><CutIcon /></ToolButton>
                    <ToolButton aria-label="Copy"><CopyIcon /></ToolButton>
                    <ToolButton aria-label="Paste"><PasteIcon /></ToolButton>
                    <Separator $gap={3} />
                    <ToolButton $width={32} aria-label="Undo"><UndoIcon /><DownArrow color="#909090" /></ToolButton>
                    <ToolButton $width={32} aria-label="Redo"><UndoIcon flip /><DownArrow color="#909090" /></ToolButton>
                    <Separator $gap={2} />
                    <Spacer />
                    <ToolButton aria-label="Molecule view"><MoleculeIcon kind="plain" /></ToolButton>
                </ToolBar>
                <Workspace>
                    <Targets />
                    <GraphArea>
                        <GraphRow $columns="690fr 688fr 687fr">
                            <GraphPane title="SysSuitTest_4505" active chart={CHROM_1} />
                            <GraphPane title="ISTD 1-10_B-D3_1_4507" chart={CHROM_2} />
                            <GraphPane title="ISTD 1-20_B-D4_1_4508" chart={CHROM_3} />
                        </GraphRow>
                        <GraphRow $columns="1fr 1fr">
                            <GraphPane title="ISTD 1-40_B-D5_1_4509" chart={CHROM_4} />
                            <GraphPane title="ISTD 1-80_B-D6_1_4510" chart={CHROM_5} />
                        </GraphRow>
                    </GraphArea>
                </Workspace>
                <BottomHeader>
                    <PanelTitle>Retention Times - Replicate Comparison</PanelTitle>
                    <PinIcon />
                    <CloseIcon />
                </BottomHeader>
                <BottomRow>
                    <BottomPane $first><TimesChart /></BottomPane>
                    <BottomPane><AreaChart /></BottomPane>
                    <BottomPane><ErrorChart /></BottomPane>
                </BottomRow>
                <StatusBar>
                    <span>Ready</span>
                    <Spacer />
                    <span>1/1 list</span>
                    <span>1/4 mol</span>
                    <span>1/4 prec</span>
                    <span>1/8 tran</span>
                </StatusBar>
                <DocumentGrid />
            </Window>
        </>
    )
}

export default App;
